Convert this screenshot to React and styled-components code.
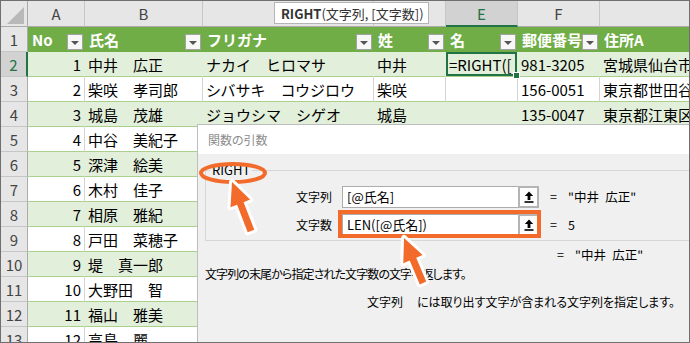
import React from "react";
import styled, { createGlobalStyle } from "styled-components";

const GlobalStyle = createGlobalStyle`
  html, body { margin: 0; padding: 0; background: #fff; }
  body { font-family: "Noto Sans CJK JP", "Noto Sans", sans-serif; }
`;

const ORANGE = "#f26b2a";
const XL_GREEN = "#217346";

const Frame = styled.div`
  position: relative;
  width: 690px;
  height: 343px;
  box-sizing: border-box;
  border: 1px solid #6f6f6f;
  overflow: hidden;
  background: #fff;
  font-family: "Noto Sans CJK JP", sans-serif;
`;

const Sheet = styled.div`
  display: grid;
  grid-template-columns: 27px 57px 118px 171px 72px 72px 82px 220px;
  grid-template-rows: 26px;
  grid-auto-rows: 25px;
  width: max-content;
`;

const Corner = styled.div`
  position: relative;
  box-sizing: border-box;
  background: #e6e6e6;
  border-right: 1px solid #ababab;
  border-bottom: 1px solid #ababab;
  &::after {
    content: "";
    position: absolute;
    right: 3px;
    bottom: 2px;
    width: 17px;
    height: 17px;
    background: #b9b9b9;
    clip-path: polygon(100% 0, 100% 100%, 0 100%);
  }
`;

const ColHead = styled.div`
  box-sizing: border-box;
  display: flex;
  align-items: center;
  justify-content: center;
  font-size: 15px;
  line-height: 1;
  color: ${(p) => (p.$active ? XL_GREEN : "#444")};
  background: ${(p) => (p.$active ? "#d2d2d2" : "#e6e6e6")};
  border-right: 1px solid #c6c6c6;
  border-bottom: ${(p) => (p.$active ? `2px solid ${XL_GREEN}` : "1px solid #ababab")};
`;

const RowHead = styled.div`
  box-sizing: border-box;
  display: flex;
  align-items: center;
  justify-content: center;
  font-size: 15px;
  line-height: 1;
  color: ${(p) => (p.$active ? XL_GREEN : "#444")};
  background: ${(p) => (p.$active ? "#d2d2d2" : "#e6e6e6")};
  border-bottom: 1px solid #c6c6c6;
  border-right: ${(p) => (p.$active ? `2px solid ${XL_GREEN}` : "1px solid #ababab")};
`;

const HeadCell = styled.div`
  box-sizing: border-box;
  display: flex;
  align-items: center;
  justify-content: space-between;
  padding: 0 2px 0 4px;
  background: #70ad47;
  color: #fff;
  font-weight: bold;
  font-size: 15px;
  line-height: 1;
  white-space: nowrap;
  overflow: hidden;
`;

const FilterBtn = styled.span`
  align-self: flex-end;
  margin-bottom: 2px;
  flex: none;
  width: 16px;
  height: 16px;
  box-sizing: border-box;
  border: 1px solid #a3a3a3;
  background: #f7f7f7;
  display: flex;
  align-items: center;
  justify-content: center;
  &::before {
    content: "";
    margin-top: 2px;
    border-left: 4px solid transparent;
    border-right: 4px solid transparent;
    border-top: 4px solid #555;
  }
`;

const Cell = styled.div`
  position: relative;
  box-sizing: border-box;
  display: flex;
  align-items: center;
  justify-content: ${(p) => (p.$num ? "flex-end" : "flex-start")};
  padding: 0 3px;
  font-size: 15px;
  line-height: 1;
  color: #000;
  white-space: nowrap;
  overflow: ${(p) => (p.$active ? "visible" : "hidden")};
  background: ${(p) => (p.$green ? "#e2efda" : "#fff")};
  border-bottom: 1px solid #a9d08e;
  border-right: 1px solid ${(p) => (p.$green ? "#e2efda" : "#d4d4d4")};
  box-shadow: ${(p) => (p.$active ? `inset 0 0 0 2px ${XL_GREEN}` : "none")};
`;

const FillHandle = styled.span`
  position: absolute;
  right: -3px;
  bottom: -3px;
  width: 5px;
  height: 5px;
  background: ${XL_GREEN};
  border: 1px solid #fff;
  z-index: 2;
`;

const Tooltip = styled.div`
  position: absolute;
  left: 273px;
  top: 1px;
  box-sizing: border-box;
  width: 155px;
  height: 22px;
  padding-left: 6px;
  display: flex;
  align-items: center;
  background: #fff;
  border: 1px solid #b4b4b4;
  color: #333;
  font-size: 13px;
  line-height: 1;
  white-space: nowrap;
  z-index: 3;
  b { font-weight: bold; }
`;

/* ---------- dialog ---------- */
const Dialog = styled.div`
  position: absolute;
  left: 196px;
  top: 123px;
  width: 520px;
  height: 240px;
  box-sizing: border-box;
  border: 1px solid #bdbdbd;
  background: #f0f0f0;
  display: flex;
  flex-direction: column;
  color: #000;
  font-size: 12px;
  line-height: 16px;
  font-feature-settings: "palt";
`;

const TitleBar = styled.div`
  height: 29px;
  flex: none;
  display: flex;
  align-items: center;
  padding-left: 10px;
  background: #fff;
  color: #8c8c8c;
  font-size: 12px;
`;

const DialogBody = styled.div`
  padding: 8px 0 0 7px;
  display: flex;
  flex-direction: column;
`;

const GroupBox = styled.fieldset`
  margin: 0;
  min-width: 0;
  padding: 8px 0 4px 0;
  border: 1px solid #d6d6d6;
  border-right: none;
  display: flex;
  flex-direction: column;
  gap: 6px;
`;

const Legend = styled.legend`
  margin-left: 4px;
  padding: 0 2px;
  font-size: 13px;
  line-height: 16px;
  font-feature-settings: normal;
`;

const ArgRow = styled.div`
  display: flex;
  align-items: center;
  height: 22px;
`;

const ArgLabel = styled.span`
  width: 126px;
  text-align: right;
  margin-right: 10px;
  font-size: 12px;
`;

const ArgInput = styled.div`
  box-sizing: border-box;
  width: 176px;
  height: 22px;
  padding-left: 4px;
  display: flex;
  align-items: center;
  background: #fff;
  border: 1px solid #acacac;
  border-right: none;
  font-size: 13px;
  font-feature-settings: normal;
  white-space: nowrap;
`;

const RefButton = styled.span`
  box-sizing: border-box;
  width: 21px;
  height: 22px;
  display: flex;
  align-items: center;
  justify-content: center;
  background: #fdfdfd;
  border: 2px solid #b4b4b4;
`;

const Value = styled.span`
  display: flex;
  margin-left: 11px;
  font-size: 12.5px;
  white-space: nowrap;
`;

const Eq = styled.span`
  width: 18px;
`;

const ResultLine = styled.div`
  margin-top: 6px;
  padding-left: 341px;
  display: flex;
`;

const Description = styled.div`
  margin-top: 3px;
  white-space: nowrap;
  letter-spacing: -0.9px;
`;

const ArgHelp = styled.div`
  margin-top: 12px;
  padding-left: 162px;
  display: flex;
  gap: 14px;
  white-space: nowrap;
`;

const Annotations = styled.svg`
  position: absolute;
  left: -1px;
  top: -1px;
  width: 690px;
  height: 343px;
  pointer-events: none;
  z-index: 5;
`;

const UpIcon = () => (
  <svg width="10" height="12" viewBox="0 0 10 12">
    <polygon points="5,0.5 0.8,5 3.6,5 3.6,9 6.4,9 6.4,5 9.2,5" fill="#000" />
    <rect x="0.5" y="10.2" width="9" height="1.6" fill="#000" />
  </svg>
);

function arrowPoints(tail, tip, headLen = 23, headW = 21, shaftW = 7) {
  const [tx, ty] = tail;
  const [hx, hy] = tip;
  const dx = hx - tx;
  const dy = hy - ty;
  const L = Math.hypot(dx, dy);
  const ux = dx / L;
  const uy = dy / L;
  const px = -uy;
  const py = ux;
  const bx = hx - ux * headLen;
  const by = hy - uy * headLen;
  const s = shaftW / 2;
  const h = headW / 2;
  const pts = [
    [tx + px * s, ty + py * s],
    [bx + px * s, by + py * s],
    [bx + px * h, by + py * h],
    [hx, hy],
    [bx - px * h, by - py * h],
    [bx - px * s, by - py * s],
    [tx - px * s, ty - py * s],
  ];
  return pts.map((p) => p.map((v) => v.toFixed(1)).join(",")).join(" ");
}

const Arrow = ({ tail, tip }) => {
  const pts = arrowPoints(tail, tip);
  return (
    <g>
      <polygon points={pts} fill="#fff" stroke="#fff" strokeWidth="6" strokeLinejoin="round" />
      <polygon points={pts} fill={ORANGE} />
    </g>
  );
};

/* C and D letters sit under the formula tooltip, so they are not shown */
const columns = ["A", "B", "", "", "E", "F", ""];
const headers = ["No", "氏名", "フリガナ", "姓", "名", "郵便番号", "住所A"];
const rows = [
  ["1", "中井　広正", "ナカイ　ヒロマサ", "中井", "=RIGHT([", "981-3205", "宮城県仙台市"],
  ["2", "柴咲　孝司郎", "シバサキ　コウジロウ", "柴咲", "", "156-0051", "東京都世田谷"],
  ["3", "城島　茂雄", "ジョウシマ　シゲオ", "城島", "", "135-0047", "東京都江東区"],
  ["4", "中谷　美紀子"],
  ["5", "深津　絵美"],
  ["6", "木村　佳子"],
  ["7", "相原　雅紀"],
  ["8", "戸田　菜穂子"],
  ["9", "堤　真一郎"],
  ["10", "大野田　智"],
  ["11", "福山　雅美"],
  ["12", "高島　麗"],
];

export default function App() {
  return (
    <>
      <GlobalStyle />
      <Frame>
        <Sheet>
          <Corner />
          {columns.map((c, i) => (
            <ColHead key={"c" + i} $active={c === "E"}>
              {c}
            </ColHead>
          ))}
          <RowHead>1</RowHead>
          {headers.map((h, i) => (
            <HeadCell key={"h" + i}>
              <span>{h}</span>
              {i < 6 && <FilterBtn />}
            </HeadCell>
          ))}
          {rows.map((r, ri) => {
            const green = ri % 2 === 0;
            return (
              <React.Fragment key={"r" + ri}>
                <RowHead $active={ri === 0}>{ri + 2}</RowHead>
                {Array.from({ length: 7 }).map((_, ci) => {
                  const active = ri === 0 && ci === 4;
                  return (
                    <Cell
                      key={ci}
                      $green={green}
                      $num={ci === 0}
                      $active={active}
                    >
                      {r[ci] || ""}
                      {active && <FillHandle />}
                    </Cell>
                  );
                })}
              </React.Fragment>
            );
          })}
        </Sheet>

        <Tooltip>
          <b>RIGHT</b>(文字列, [文字数])
        </Tooltip>

        <Dialog>
          <TitleBar>関数の引数</TitleBar>
          <DialogBody>
            <GroupBox>
              <Legend>RIGHT</Legend>
              <ArgRow>
                <ArgLabel>文字列</ArgLabel>
                <ArgInput>[@氏名]</ArgInput>
                <RefButton>
                  <UpIcon />
                </RefButton>
                <Value>
                  <Eq>=</Eq>"中井&ensp;広正"
                </Value>
              </ArgRow>
              <ArgRow>
                <ArgLabel>文字数</ArgLabel>
                <ArgInput>LEN([@氏名])</ArgInput>
                <RefButton>
                  <UpIcon />
                </RefButton>
                <Value>
                  <Eq>=</Eq>5
                </Value>
              </ArgRow>
            </GroupBox>
            <ResultLine>
              <Value>
                <Eq>=</Eq>"中井&ensp;広正"
              </Value>
            </ResultLine>
            <Description>文字列の末尾から指定された文字数の文字を返します。</Description>
            <ArgHelp>
              <span>文字列</span>
              <span>には取り出す文字が含まれる文字列を指定します。</span>
            </ArgHelp>
          </DialogBody>
        </Dialog>

        <Annotations viewBox="0 0 690 343">
          <ellipse cx="233" cy="173" rx="32" ry="9" fill="none" stroke={ORANGE} strokeWidth="4" />
          <rect x="340" y="212" width="199" height="24" fill="none" stroke={ORANGE} strokeWidth="4" />
          <Arrow tail={[251, 231]} tip={[232, 182]} />
          <Arrow tail={[423, 283]} tip={[404, 238]} />
        </Annotations>
      </Frame>
    </>
  );
}
